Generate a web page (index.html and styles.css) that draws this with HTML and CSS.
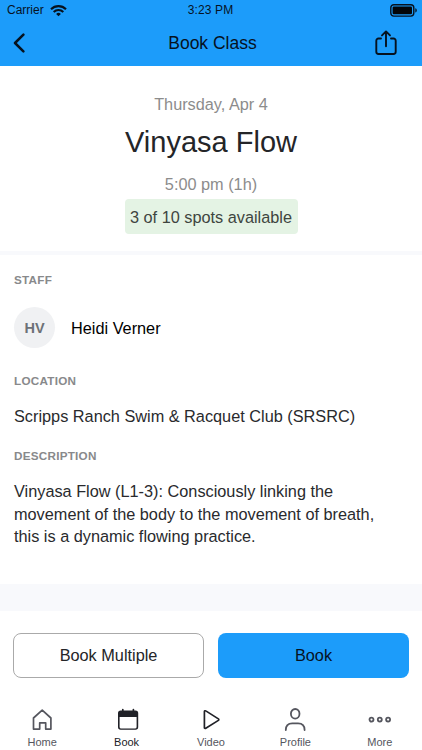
FILE: index.html
```html
<!DOCTYPE html>
<html lang="en">
<head>
<meta charset="utf-8">
<title>Book Class</title>
<link rel="stylesheet" href="styles.css">
</head>
<body>
<div class="app">
  <header class="header">
    <div class="status">
      <div class="carrier"><span>Carrier</span>
        <svg width="17" height="13" viewBox="0 0 17 13" fill="none" stroke="#06121f" stroke-width="2.1"><path d="M1 5.2a10.7 10.7 0 0 1 15 0M3.7 8a6.8 6.800 0 0 1 9.600 0"/><path d="M8.5 12.3 6.1 9.900a3.400 3.400 0 0 1 4.800 0z" fill="#06121f" stroke="none"/></svg>
      </div>
      <span class="clock">3:23 PM</span>
      <svg class="battery" width="28" height="13" viewBox="0 0 28 13"><rect x=".8" y=".7" width="23" height="11.4" rx="3" fill="none" stroke="#06121f" stroke-width="1.4"/><rect x="2.600" y="2.500" width="19.400" height="7.800" rx="1.2" fill="#030609"/><path d="M25.300 4.300c2 .7 2 3.600 0 4.300z" fill="#06121f"/></svg>
    </div>
    <div class="nav">
      <svg class="back" width="12" height="20" viewBox="0 0 12 20" fill="none" stroke="#06121f" stroke-width="2.5" stroke-linecap="round" stroke-linejoin="round"><path d="M10.400 1.700 2 10l8.400 8.300"/></svg>
      <h1>Book Class</h1>
      <svg class="share" width="22" height="26" viewBox="0 0 22 26" fill="none" stroke="#06121f" stroke-width="1.9" stroke-linecap="round" stroke-linejoin="round"><path d="M6 8.500H3.500A2.200 2.200 0 0 0 1.300 10.700v11.100a2.200 2.200 0 0 0 2.200 2.200h15a2.200 2.200 0 0 0 2.200-2.200V10.700a2.200 2.200 0 0 0-2.200-2.200H16M11 16.200V1.700M7 5.400l4-4 4 4"/></svg>
    </div>
  </header>
  <section class="summary">
    <p class="date">Thursday, Apr 4</p>
    <h2>Vinyasa Flow</h2>
    <p class="time">5:00 pm (1h)</p>
    <p class="spots">3 of 10 spots available</p>
  </section>
  <main class="details">
    <h3>STAFF</h3>
    <div class="person"><span class="avatar">HV</span><span class="name">Heidi Verner</span></div>
    <h3>LOCATION</h3>
    <p class="location">Scripps Ranch Swim &amp; Racquet Club (SRSRC)</p>
    <h3>DESCRIPTION</h3>
    <p class="description">Vinyasa Flow (L1-3): Consciously linking the<br>movement of the body to the movement of breath,<br>this is a dynamic flowing practice.</p>
  </main>
  <div class="actions">
    <button class="multiple">Book Multiple</button>
    <button class="book">Book</button>
  </div>
  <nav class="tabs">
    <div class="tab"><svg width="24" height="24" viewBox="0 0 24 24" fill="none" stroke="#55565e" stroke-width="1.7" stroke-linejoin="round"><path d="M3.500 10 12.200 2.200l8.700 7.800v11.100h-5.200v-6.300H9.700v6.300H3.500z"/></svg><span>Home</span></div>
    <div class="tab active"><svg class="calendar" width="24" height="24" viewBox="0 0 24 24"><path d="M4.700 2.400h14.800a2.700 2.700 0 0 1 2.700 2.700v14a2.700 2.700 0 0 1-2.700 2.700H4.700A2.700 2.700 0 0 1 2 19.100v-14a2.700 2.700 0 0 1 2.700-2.700zM3.600 9v9.900a1.600 1.600 0 0 0 1.600 1.600H19a1.600 1.600 0 0 0 1.600-1.600V9z" fill="#202127" fill-rule="evenodd"/><path d="M6.800 1.500v2.500M17.400 1.500v2.500" stroke="#202127" stroke-width="1.700" stroke-linecap="round"/></svg><span>Book</span></div>
    <div class="tab"><svg width="24" height="24" viewBox="0 0 24 24" fill="none" stroke="#202127" stroke-width="1.700" stroke-linejoin="round"><path d="M5.400 3.600v16a.9.9 0 0 0 1.400.7l12.600-7.900a.9.9 0 0 0 0-1.500L6.800 2.900a.9.9 0 0 0-1.400.7z"/></svg><span>Video</span></div>
    <div class="tab"><svg width="24" height="24" viewBox="0 0 24 24" fill="none" stroke="#55565e" stroke-width="1.800" stroke-linecap="round"><ellipse cx="12.200" cy="5.800" rx="4.300" ry="4.800"/><path d="M2.800 22c0-4.200 2.600-6.700 6.500-6.700h5.800c3.900 0 6.500 2.500 6.500 6.700"/></svg><span>Profile</span></div>
    <div class="tab"><svg width="24" height="24" viewBox="0 0 24 24" fill="none" stroke="#55565e" stroke-width="1.800"><circle cx="3.500" cy="11.600" r="2"/><circle cx="11.800" cy="11.600" r="2"/><circle cx="20.100" cy="11.600" r="2"/></svg><span>More</span></div>
  </nav>
</div>
</body>
</html>
```
FILE: styles.css
```css
* { box-sizing: border-box; }
body { margin: 0; font-family: "Liberation Sans", Arial, sans-serif; font-size: 16.3px; color: #292a2d; background: #fff; }
h1, h2, h3, p { margin: 0; font-weight: 400; }
svg { display: block; flex: none; }
.app { width: 422px; height: 750px; display: flex; flex-direction: column; overflow: hidden; white-space: nowrap; }
.header { height: 66px; background: #1c9cfa; color: #06121f; flex: none; }
.status { height: 20px; display: grid; grid-template-columns: 1fr auto 1fr; align-items: center; padding: 0 4px 0 7px; font-size: 12px; }
.carrier { display: flex; align-items: center; gap: 6px; }
.clock { letter-spacing: .15px; padding: 0 4px 1px 0; }
.battery { justify-self: end; }
.nav { height: 46px; display: grid; grid-template-columns: 1fr auto 1fr; align-items: center; padding: 0 25px 0 13px; }
.nav h1 { font-size: 17.5px; padding-left: 15px; }
.share { justify-self: end; }
.summary { height: 189px; border-bottom: 4px solid #f8f9fc; display: flex; flex-direction: column; align-items: center; padding-top: 28px; flex: none; }
.date, .time { color: #8c8c8c; line-height: 20px; }
.summary h2 { font-size: 29px; line-height: 36px; margin: 10px 0 14px; color: #242528; }
.spots { margin-top: 5px; height: 35px; line-height: 36px; width: 173px; text-align: center; background: #e4f3e4; border-radius: 4px; color: #3e453f; }
.details { height: 356px; border-bottom: 27px solid #f8f9fc; padding: 18px 14px 0; flex: none; }
.details h3 { font-size: 11.7px; line-height: 14px; font-weight: 700; color: #88898b; letter-spacing: .25px; }
.person { display: flex; align-items: center; gap: 16px; margin: 20px 0 26px; height: 41px; }
.avatar { width: 41px; height: 41px; border-radius: 50%; background: #f0f1f3; color: #6d7177; font-size: 14.5px; font-weight: 700; display: flex; align-items: center; justify-content: center; }
.name { color: #000; padding-top: 1px; }
.location { line-height: 22px; margin: 17px 0 22px; }
.description { line-height: 22.5px; margin-top: 17px; }
.actions { display: grid; grid-template-columns: 1fr 1fr; gap: 14px; padding: 22px 13px 0; flex: none; }
.actions button { height: 45px; border-radius: 8px; font: 16.3px "Liberation Sans", Arial, sans-serif; padding: 0; }
.multiple { background: #fff; border: 1px solid #aaa; color: #242528; }
.book { background: #1c9cfa; border: 0; color: #06121f; }
.tabs { display: grid; grid-template-columns: repeat(5, 1fr); padding-top: 30px; }
.tab { display: flex; flex-direction: column; align-items: center; gap: 4px; font-size: 11px; line-height: 13px; color: #55565e; }
.active { color: #202127; }
.calendar { position: relative; left: 1px; }
```
